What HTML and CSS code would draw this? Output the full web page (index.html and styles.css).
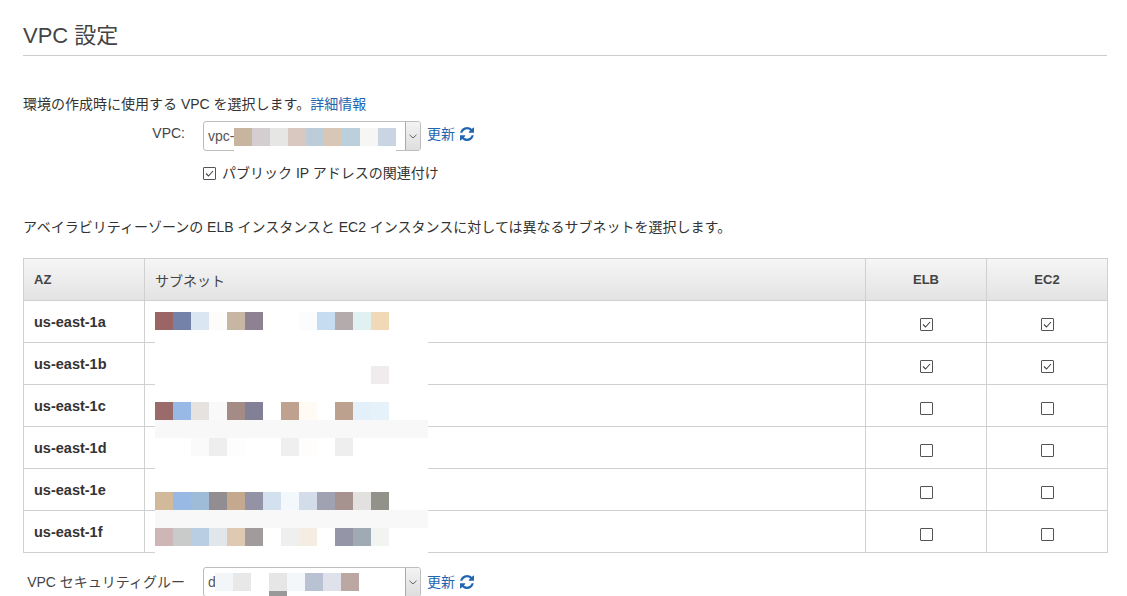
FILE: index.html
```html
<!DOCTYPE html>
<html lang="ja">
<head>
<meta charset="utf-8">
<title>VPC 設定</title>
<link rel="stylesheet" href="styles.css">
</head>
<body>
<div class="page">
  <h1 class="title">VPC 設定</h1>
  <p class="intro">環境の作成時に使用する VPC を選択します。<a class="link" href="#">詳細情報</a></p>

  <div class="field field-vpc">
    <label class="label">VPC:</label>
    <div class="select">
      <span class="sel-text">vpc-</span>
      <span class="sel-btn"><svg width="8" height="5" viewBox="0 0 8 5"><polyline points="0.5,0.8 4,4 7.5,0.8" fill="none" stroke="#666" stroke-width="1"/></svg></span>
      <div class="mosaic mosaic-vpc">
        <div class="mr"><span class="mc" style="background:#c8b5a0"></span><span class="mc" style="background:#d4ced0"></span><span class="mc" style="background:#e6e7e4"></span><span class="mc" style="background:#d9c8bf"></span><span class="mc" style="background:#bccdd9"></span><span class="mc" style="background:#d8c7b7"></span><span class="mc" style="background:#bccfdc"></span><span class="mc" style="background:#f6f6f4"></span><span class="mc" style="background:#c9d5e2"></span></div>
      </div>
    </div>
    <a class="refresh" href="#">更新<svg class="ico" viewBox="0 0 1536 1536"><path fill="currentColor" d="M1511 928q0 5-1 7-64 268-268 434.5T764 1536q-146 0-282.5-55T238 1324l-129 129q-19 19-45 19t-45-19-19-45V960q0-26 19-45t45-19h448q26 0 45 19t19 45-19 45l-137 137q71 66 161 102t187 36q134 0 250-65t186-179q11-17 53-117 8-23 30-23h192q13 0 22.5 9.5t9.5 22.5zm25-800v448q0 26-19 45t-45 19h-448q-26 0-45-19t-19-45 19-45l138-138q-148-137-349-137-134 0-250 65T332 500q-11 17-53 117-8 23-30 23H50q-13 0-22.5-9.5T18 608v-7q65-268 270-434.5T768 0q146 0 284 55.5T1297 212l130-129q19-19 45-19t45 19 19 45z"/></svg></a>
  </div>

  <div class="check-row">
    <span class="cb checked"><svg viewBox="0 0 11 11" width="11" height="11"><polyline points="2,5.5 4.5,8 9,3" fill="none" stroke="#444" stroke-width="1.1"/></svg></span>
    <span>パブリック IP アドレスの関連付け</span>
  </div>

  <p class="desc">アベイラビリティーゾーンの ELB インスタンスと EC2 インスタンスに対しては異なるサブネットを選択します。</p>

  <div class="tbl">
    <div class="th">AZ</div>
    <div class="th th-jp">サブネット</div>
    <div class="th c">ELB</div>
    <div class="th c">EC2</div>

    <div class="td az">us-east-1a</div><div class="td"></div>
    <div class="td c"><span class="cb checked"><svg viewBox="0 0 11 11" width="11" height="11"><polyline points="2,5.5 4.5,8 9,3" fill="none" stroke="#444" stroke-width="1.1"/></svg></span></div>
    <div class="td c"><span class="cb checked"><svg viewBox="0 0 11 11" width="11" height="11"><polyline points="2,5.5 4.5,8 9,3" fill="none" stroke="#444" stroke-width="1.1"/></svg></span></div>

    <div class="td az">us-east-1b</div><div class="td"></div>
    <div class="td c"><span class="cb checked"><svg viewBox="0 0 11 11" width="11" height="11"><polyline points="2,5.5 4.5,8 9,3" fill="none" stroke="#444" stroke-width="1.1"/></svg></span></div>
    <div class="td c"><span class="cb checked"><svg viewBox="0 0 11 11" width="11" height="11"><polyline points="2,5.5 4.5,8 9,3" fill="none" stroke="#444" stroke-width="1.1"/></svg></span></div>

    <div class="td az">us-east-1c</div><div class="td"></div>
    <div class="td c"><span class="cb"></span></div>
    <div class="td c"><span class="cb"></span></div>

    <div class="td az">us-east-1d</div><div class="td"></div>
    <div class="td c"><span class="cb"></span></div>
    <div class="td c"><span class="cb"></span></div>

    <div class="td az">us-east-1e</div><div class="td"></div>
    <div class="td c"><span class="cb"></span></div>
    <div class="td c"><span class="cb"></span></div>

    <div class="td az">us-east-1f</div><div class="td"></div>
    <div class="td c"><span class="cb"></span></div>
    <div class="td c"><span class="cb"></span></div>

    <div class="mosaic mosaic-subnet">
      <div class="mr"><span class="mc" style="background:#9b6565"></span><span class="mc" style="background:#7481a9"></span><span class="mc" style="background:#dbe6f3"></span><span class="mc" style="background:#fdfcfa"></span><span class="mc" style="background:#c6b6a2"></span><span class="mc" style="background:#8e8292"></span><span class="mc"></span><span class="mc"></span><span class="mc" style="background:#fafcfe"></span><span class="mc" style="background:#c6dcf1"></span><span class="mc" style="background:#b4abad"></span><span class="mc" style="background:#dff2f1"></span><span class="mc" style="background:#f1d8b6"></span></div>
      <div class="mr"></div>
      <div class="mr"></div>
      <div class="mr"><span class="mc"></span><span class="mc"></span><span class="mc"></span><span class="mc"></span><span class="mc"></span><span class="mc"></span><span class="mc"></span><span class="mc"></span><span class="mc"></span><span class="mc"></span><span class="mc"></span><span class="mc"></span><span class="mc" style="background:#f0ebed"></span></div>
      <div class="mr"></div>
      <div class="mr"><span class="mc" style="background:#9b6b6b"></span><span class="mc" style="background:#98b9e6"></span><span class="mc" style="background:#e6e2df"></span><span class="mc" style="background:#f9f9f9"></span><span class="mc" style="background:#a58b86"></span><span class="mc" style="background:#828097"></span><span class="mc"></span><span class="mc" style="background:#bea18f"></span><span class="mc" style="background:#fffbf4"></span><span class="mc"></span><span class="mc" style="background:#bca18e"></span><span class="mc" style="background:#e3f0fa"></span><span class="mc" style="background:#e6f2fa"></span></div>
      <div class="mr band"></div>
      <div class="mr"><span class="mc"></span><span class="mc"></span><span class="mc" style="background:#fafafa"></span><span class="mc" style="background:#eeeeee"></span><span class="mc" style="background:#fdfdfd"></span><span class="mc"></span><span class="mc"></span><span class="mc" style="background:#efefef"></span><span class="mc" style="background:#fefdfb"></span><span class="mc"></span><span class="mc" style="background:#efeeee"></span></div>
      <div class="mr"></div>
      <div class="mr"></div>
      <div class="mr"><span class="mc" style="background:#d2b99a"></span><span class="mc" style="background:#98b9e3"></span><span class="mc" style="background:#9ebcd8"></span><span class="mc" style="background:#918d91"></span><span class="mc" style="background:#c5a98f"></span><span class="mc" style="background:#9393a5"></span><span class="mc" style="background:#d3e0f0"></span><span class="mc" style="background:#f3f8fd"></span><span class="mc" style="background:#d3dde9"></span><span class="mc" style="background:#a0a2b1"></span><span class="mc" style="background:#a69390"></span><span class="mc" style="background:#e2e1e0"></span><span class="mc" style="background:#93928a"></span></div>
      <div class="mr band"></div>
      <div class="mr"><span class="mc" style="background:#cdb6b5"></span><span class="mc" style="background:#c9cbcb"></span><span class="mc" style="background:#b9cee2"></span><span class="mc" style="background:#e0e6ea"></span><span class="mc" style="background:#dfc9b3"></span><span class="mc" style="background:#a29b9c"></span><span class="mc"></span><span class="mc" style="background:#f0efef"></span><span class="mc" style="background:#f5ede1"></span><span class="mc"></span><span class="mc" style="background:#9496a8"></span><span class="mc" style="background:#a0aab4"></span><span class="mc" style="background:#f2f4f2"></span></div>
    </div>
  </div>

  <div class="field field-sg">
    <label class="label">VPC セキュリティグルー</label>
    <div class="select">
      <span class="sel-text">d</span>
      <span class="sel-btn"><svg width="8" height="5" viewBox="0 0 8 5"><polyline points="0.5,0.8 4,4 7.5,0.8" fill="none" stroke="#666" stroke-width="1"/></svg></span>
      <div class="mosaic mosaic-sg">
        <div class="mr"><span class="mc" style="background:#f3f6f8"></span><span class="mc" style="background:#e8e8e8"></span><span class="mc"></span><span class="mc" style="background:#e6e6e6"></span><span class="mc" style="background:#f3f7f9"></span><span class="mc" style="background:#b8c2d2"></span><span class="mc" style="background:#dfe2ea"></span><span class="mc" style="background:#bca8a2"></span></div>
        <div class="mr"><span class="mc"></span><span class="mc"></span><span class="mc"></span><span class="mc" style="background:#999999"></span></div>
      </div>
    </div>
    <a class="refresh" href="#">更新<svg class="ico" viewBox="0 0 1536 1536"><path fill="currentColor" d="M1511 928q0 5-1 7-64 268-268 434.5T764 1536q-146 0-282.5-55T238 1324l-129 129q-19 19-45 19t-45-19-19-45V960q0-26 19-45t45-19h448q26 0 45 19t19 45-19 45l-137 137q71 66 161 102t187 36q134 0 250-65t186-179q11-17 53-117 8-23 30-23h192q13 0 22.5 9.5t9.5 22.5zm25-800v448q0 26-19 45t-45 19h-448q-26 0-45-19t-19-45 19-45l138-138q-148-137-349-137-134 0-250 65T332 500q-11 17-53 117-8 23-30 23H50q-13 0-22.5-9.5T18 608v-7q65-268 270-434.5T768 0q146 0 284 55.5T1297 212l130-129q19-19 45-19t45 19 19 45z"/></svg></a>
  </div>
</div>
</body>
</html>
```
FILE: styles.css
```css
html, body {
  margin: 0;
  padding: 0;
  background: #fff;
  overflow: hidden;
}
body {
  font-family: "Liberation Sans", Arial, "Noto Sans CJK JP", sans-serif;
  font-size: 14px;
  color: #333;
}
.page {
  padding: 0 20px 0 23px;
}
.title {
  margin: 0;
  padding: 21px 0 4px;
  font-size: 22px;
  line-height: 30px;
  font-weight: normal;
  color: #444;
  border-bottom: 1px solid #cccccc;
}
.intro {
  margin: 38px 0 0;
  line-height: 20px;
}
.link, .refresh {
  color: #2266b0;
  text-decoration: none;
}
.field {
  display: flex;
  align-items: flex-start;
}
.field-vpc {
  margin-top: 7px;
}
.label {
  width: 160px;
  margin-left: 2px;
  margin-right: 18px;
  text-align: right;
  white-space: nowrap;
  overflow: hidden;
  color: #444;
  line-height: 20px;
}
.field-vpc .label {
  padding-top: 2px;
}
.field-sg {
  margin-top: 14px;
}
.field-sg .label {
  line-height: 30px;
}
.select {
  position: relative;
  box-sizing: border-box;
  width: 218px;
  height: 30px;
  border: 1px solid #bdbdbd;
  border-radius: 3px;
  display: flex;
  justify-content: space-between;
  background: #fff;
}
.sel-text {
  padding-left: 4px;
  line-height: 28px;
  color: #555;
}
.sel-btn {
  width: 14px;
  border-left: 1px solid #aaaaaa;
  background: linear-gradient(#f3f3f3, #dedede);
  display: flex;
  align-items: center;
  justify-content: center;
  border-radius: 0 2px 2px 0;
}
.refresh {
  margin-left: 6px;
  line-height: 30px;
  display: flex;
  align-items: center;
  gap: 5px;
}
.field-vpc .refresh {
  line-height: 26px;
}
.ico {
  width: 14px;
  height: 14px;
}
.check-row {
  margin: 12px 0 0 180px;
  display: flex;
  align-items: center;
  gap: 6px;
  line-height: 20px;
}
.cb {
  box-sizing: border-box;
  width: 13px;
  height: 13px;
  border: 1px solid #555;
  border-radius: 1px;
  background: #fff;
  display: inline-flex;
  align-items: center;
  justify-content: center;
}
.desc {
  margin: 34px 0 0;
  line-height: 20px;
}
.tbl {
  position: relative;
  margin-top: 21px;
  width: 1085px;
  box-sizing: border-box;
  border-top: 1px solid #d0d0d0;
  border-left: 1px solid #d0d0d0;
  display: grid;
  grid-template-columns: 121px 721px 121px 121px;
  grid-auto-rows: 42px;
}
.th, .td {
  box-sizing: border-box;
  border-right: 1px solid #d0d0d0;
  border-bottom: 1px solid #d0d0d0;
  display: flex;
  align-items: center;
  padding-left: 10px;
}
.th {
  background: linear-gradient(#f6f6f6, #e3e3e3);
  font-size: 13px;
  font-weight: bold;
  color: #444;
}
.th-jp {
  font-weight: normal;
  font-size: 14px;
}
.td.az {
  font-weight: bold;
  font-size: 14.5px;
  color: #333;
}
.c {
  justify-content: center;
  padding-left: 0;
}
.td.c {
  padding-top: 6px;
}
.mosaic {
  position: absolute;
  background: #fff;
}
.mr {
  display: flex;
  height: 18px;
}
.mr.band {
  background: #f8f8f8;
}
.mc {
  width: 18px;
  height: 18px;
  flex: none;
}
.mosaic-subnet {
  left: 131px;
  top: 53px;
  width: 273px;
  padding-bottom: 9px;
}
.mosaic-vpc {
  left: 30px;
  top: 6px;
  width: 162px;
  height: 24px;
}
.mosaic-sg {
  left: 11px;
  top: 5px;
  width: 144px;
}
```
